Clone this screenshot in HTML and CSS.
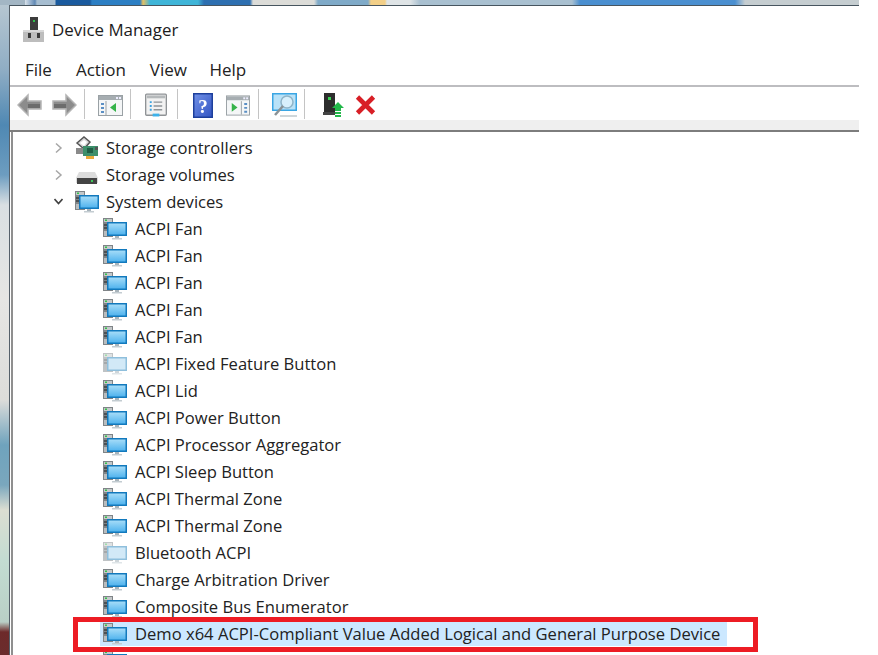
FILE: index.html
```html
<!DOCTYPE html>
<html lang="en">
<head>
<meta charset="utf-8">
<title>Device Manager</title>
<link rel="stylesheet" href="styles.css">
</head>
<body>
<svg class="defs" width="0" height="0" aria-hidden="true">
  <defs>
    <linearGradient id="screen" x1="0" y1="0" x2="0" y2="1">
      <stop offset="0" stop-color="#a5dcf8"/><stop offset="1" stop-color="#52b4ee"/>
    </linearGradient>
    <linearGradient id="helpfill" x1="0" y1="0" x2="1" y2="1">
      <stop offset="0" stop-color="#6f8fe6"/><stop offset="1" stop-color="#3557c4"/>
    </linearGradient>
    <symbol id="sys" viewBox="0 0 24 22">
      <rect x="0" y="0" width="10" height="19" fill="#7f8487"/>
      <rect x="1" y="1" width="8" height="3" fill="#c4c8ca"/>
      <rect x="2" y="1.500" width="2" height="1.500" fill="#35c24a"/>
      <rect x="1" y="6" width="8" height="2" fill="#4d5154"/>
      <rect x="1" y="9" width="8" height="2" fill="#4d5154"/>
      <rect x="1" y="13" width="8" height="5" fill="#b8bcbe"/>
      <rect x="4" y="4" width="20" height="14" fill="#1279bd"/>
      <rect x="5.500" y="5.500" width="17" height="11" fill="url(#screen)"/>
      <rect x="12" y="18" width="4" height="2" fill="#a9b4bb"/>
      <rect x="9" y="20" width="10" height="1.500" fill="#c3ccd1"/>
    </symbol>
    <symbol id="sysoff" viewBox="0 0 24 22">
      <rect x="0" y="0" width="10" height="19" fill="#bfc3c5"/>
      <rect x="1" y="1" width="8" height="3" fill="#dfe2e3"/>
      <rect x="2" y="1.500" width="2" height="1.500" fill="#9fdca9"/>
      <rect x="1" y="6" width="8" height="2" fill="#a5a8aa"/>
      <rect x="1" y="9" width="8" height="2" fill="#a5a8aa"/>
      <rect x="4" y="4" width="20" height="14" fill="#8fbfdc"/>
      <rect x="5.500" y="5.500" width="17" height="11" fill="#d2e9f7"/>
      <rect x="12" y="18" width="4" height="2" fill="#cfd6da"/>
      <rect x="9" y="20" width="10" height="1.500" fill="#dfe5e8"/>
    </symbol>
  </defs>
</svg>
<div class="shot">
  <div class="window">
    <div class="titlebar">
      <svg class="appicon" viewBox="0 0 21 25" width="21" height="25">
        <rect x="7" y="0" width="8" height="13" fill="#3c3c3c"/>
        <rect x="10" y="3" width="2" height="2" fill="#2fc04a"/>
        <rect x="0" y="13" width="21" height="12" fill="#bdbdbd"/>
        <rect x="0" y="13" width="21" height="2" fill="#d8d8d8"/>
        <rect x="5" y="16" width="3" height="5" fill="#3a3a3a"/>
        <rect x="14" y="16" width="3" height="5" fill="#3a3a3a"/>
      </svg>
      <span class="title">Device Manager</span>
    </div>
    <nav class="menubar">
      <span class="menuitem">File</span>
      <span class="menuitem">Action</span>
      <span class="menuitem">View</span>
      <span class="menuitem">Help</span>
    </nav>
    <div class="toolbar">
      <div class="group nav">
        <svg class="tool" width="25" height="24" viewBox="0 0 25 24"><path d="M1 12 11 2v6h13v8H11v6z" fill="#8c8c8c" stroke="#b4b4b4" stroke-width="1.500"/><path d="M11 11h12v4H11z" fill="#6c6c6c"/></svg>
        <svg class="tool" width="25" height="24" viewBox="0 0 25 24"><path d="M24 12 14 2v6H1v8h13v6z" fill="#8c8c8c" stroke="#b4b4b4" stroke-width="1.500"/><path d="M2 11h12v4H2z" fill="#6c6c6c"/></svg>
      </div>
      <div class="group tree-toggle">
        <svg class="tool" width="25" height="21" viewBox="0 0 25 21"><rect x=".5" y=".5" width="24" height="20" fill="#f4f6f7" stroke="#9aa1a5"/><rect x="1" y="1" width="23" height="4" fill="#a6adb1"/><rect x="18" y="2" width="2" height="2" fill="#eef"/><rect x="21" y="2" width="2" height="2" fill="#eef"/><path d="M8 6v14" stroke="#9aa1a5"/><path d="M3 9h3M3 13h3M3 17h3" stroke="#5a8fc4" stroke-width="2"/><path d="M18 8v9l-6-4.500z" fill="#35b34a"/></svg>
      </div>
      <div class="group props">
        <svg class="tool" width="22" height="24" viewBox="0 0 23 24"><rect x=".7" y=".7" width="21.600" height="22" rx="1" fill="#f2f2f2" stroke="#8f9396" stroke-width="1.400"/><rect x="2" y="2" width="19" height="3" fill="#b5b9bb"/><path d="M5 9h2M5 13h2M5 17h2" stroke="#3da3e0" stroke-width="2"/><path d="M9 9h9M9 13h9M9 17h9" stroke="#8e9498" stroke-width="1.500"/><rect x="8" y="21" width="7" height="3" fill="#3db2ea"/></svg>
      </div>
      <div class="group help">
        <svg class="tool" width="20" height="25" viewBox="0 0 20 25"><rect width="20" height="25" fill="#1d3f9c"/><rect x="1.500" y="1.500" width="17" height="22" fill="url(#helpfill)"/><text class="qmark" x="10" y="20" text-anchor="middle">?</text></svg>
        <svg class="tool" width="24" height="21" viewBox="0 0 25 21"><rect x=".5" y=".5" width="24" height="20" fill="#f4f6f7" stroke="#9aa1a5"/><rect x="1" y="1" width="23" height="4" fill="#a6adb1"/><rect x="18" y="2" width="2" height="2" fill="#eef"/><rect x="21" y="2" width="2" height="2" fill="#eef"/><path d="M16 6v14" stroke="#9aa1a5"/><path d="M19 9h3M19 13h3M19 17h3" stroke="#5a8fc4" stroke-width="2"/><path d="M6 8v9l6-4.500z" fill="#35b34a"/></svg>
      </div>
      <div class="group scan">
        <svg class="tool" width="25" height="25" viewBox="0 0 25 25"><rect x="0" y="0" width="25" height="18" fill="#3aa6e4"/><rect x="1.500" y="1.500" width="22" height="15" fill="#b9e2f8"/><circle cx="15" cy="9" r="6" fill="#d8f0fc" stroke="#8fb4c8" stroke-width="1.500"/><path d="M11 13 3 22" stroke="#8a9296" stroke-width="2.500"/><path d="M8 23h17" stroke="#bfc8cd" stroke-width="1.500"/></svg>
      </div>
      <div class="group driver">
        <svg class="tool" width="21" height="24" viewBox="0 0 21 24"><rect x="1" y="0" width="11" height="20" fill="#2d2d2d"/><rect x="5" y="4" width="3" height="3" fill="#39d353"/><rect x="0" y="19" width="12" height="3" fill="#444"/><path d="M15 9l6 6h-3v3h-6v-3H9z" fill="#22b84a"/><path d="M12 19h6v2h-6zM12 22h6v2h-6z" fill="#22b84a"/></svg>
        <svg class="tool" width="21" height="20" viewBox="0 0 20 20"><path d="M2 2 18 18M18 2 2 18" stroke="#d81f26" stroke-width="4.600"/></svg>
      </div>
    </div>
    <div class="band"></div>
    <div class="treepane">
      <ul class="tree">
        <li class="row"><svg class="chev" width="9" height="12" viewBox="0 0 9 12"><path d="M2 1.500 7 6l-5 4.500" fill="none" stroke="#a6a6a6" stroke-width="1.500"/></svg>
          <svg class="icon" width="24" height="24" viewBox="0 0 24 24"><path d="M2 7 9 1l6 5-6 7z" fill="#d8d8d8" stroke="#555" stroke-width="1.500"/><path d="M5 7 9 4l3 2-3 4z" fill="#fff"/><rect x="1" y="12" width="7" height="6" fill="#8a8a8a"/><rect x="8" y="10" width="15" height="10" fill="#3d8f6b"/><rect x="12" y="12" width="6" height="5" fill="#1f5f45"/><rect x="20" y="11" width="3" height="3" fill="#555"/><rect x="11" y="20" width="8" height="3" fill="#e8a93a"/></svg>
          <span class="label">Storage controllers</span></li>
        <li class="row"><svg class="chev" width="9" height="12" viewBox="0 0 9 12"><path d="M2 1.500 7 6l-5 4.500" fill="none" stroke="#a6a6a6" stroke-width="1.500"/></svg>
          <svg class="icon" width="24" height="22" viewBox="0 0 24 22"><path d="M4 8h16l3 6v5H1v-5z" fill="#dcdcdc"/><rect x="2" y="14" width="20" height="6" fill="#444"/><rect x="16" y="16" width="2" height="2" fill="#3fc95a"/></svg>
          <span class="label">Storage volumes</span></li>
        <li class="row"><svg class="chev" width="9" height="12" viewBox="0 0 9 12"><path d="M.5 3 4.500 7.500 8.500 3" fill="none" stroke="#404040" stroke-width="1.600"/></svg>
          <svg class="icon" width="24" height="22"><use href="#sys"/></svg>
          <span class="label">System devices</span></li>
        <li class="row child"><svg class="icon" width="24" height="22"><use href="#sys"/></svg><span class="label">ACPI Fan</span></li>
        <li class="row child"><svg class="icon" width="24" height="22"><use href="#sys"/></svg><span class="label">ACPI Fan</span></li>
        <li class="row child"><svg class="icon" width="24" height="22"><use href="#sys"/></svg><span class="label">ACPI Fan</span></li>
        <li class="row child"><svg class="icon" width="24" height="22"><use href="#sys"/></svg><span class="label">ACPI Fan</span></li>
        <li class="row child"><svg class="icon" width="24" height="22"><use href="#sys"/></svg><span class="label">ACPI Fan</span></li>
        <li class="row child"><svg class="icon" width="24" height="22"><use href="#sysoff"/></svg><span class="label">ACPI Fixed Feature Button</span></li>
        <li class="row child"><svg class="icon" width="24" height="22"><use href="#sys"/></svg><span class="label">ACPI Lid</span></li>
        <li class="row child"><svg class="icon" width="24" height="22"><use href="#sys"/></svg><span class="label">ACPI Power Button</span></li>
        <li class="row child"><svg class="icon" width="24" height="22"><use href="#sys"/></svg><span class="label">ACPI Processor Aggregator</span></li>
        <li class="row child"><svg class="icon" width="24" height="22"><use href="#sys"/></svg><span class="label">ACPI Sleep Button</span></li>
        <li class="row child"><svg class="icon" width="24" height="22"><use href="#sys"/></svg><span class="label">ACPI Thermal Zone</span></li>
        <li class="row child"><svg class="icon" width="24" height="22"><use href="#sys"/></svg><span class="label">ACPI Thermal Zone</span></li>
        <li class="row child"><svg class="icon" width="24" height="22"><use href="#sysoff"/></svg><span class="label">Bluetooth ACPI</span></li>
        <li class="row child"><svg class="icon" width="24" height="22"><use href="#sys"/></svg><span class="label">Charge Arbitration Driver</span></li>
        <li class="row child"><svg class="icon" width="24" height="22"><use href="#sys"/></svg><span class="label">Composite Bus Enumerator</span></li>
        <li class="row child selected"><svg class="icon" width="24" height="22"><use href="#sys"/></svg><span class="label">Demo x64 ACPI-Compliant Value Added Logical and General Purpose Device</span></li>
        <li class="row child"><svg class="icon" width="24" height="22"><use href="#sys"/></svg></li>
      </ul>
      <div class="callout"></div>
    </div>
  </div>
</div>
</body>
</html>
```
FILE: styles.css
```css
html, body { margin: 0; height: 100%; background: #fff; overflow: hidden; }
body { font-family: "Open Sans", "Noto Sans", sans-serif; color: #1a1a1a; }
.defs { position: absolute; }
.shot {
  width: 859px; height: 655px; box-sizing: border-box; padding: 5px 0 0 9px; overflow: hidden;
  background:
    linear-gradient(90deg, #a3b6c4 0, #a3b6c4 25px, #d9e2ea 25px, #5f88b4 35px, #a6bdd0 37px, #a6bdd0 55px, #1a5a9e 56px, #1a5a9e 90px, #2c7fc4 92px, #2c7fc4 140px, #e8c060 143px, #3fb5d8 150px, #3fb5d8 198px, #2d6fb0 204px, #2d6fb0 250px, #dcdcd8 253px, #dcdcd8 314px, #7faac8 318px, #7faac8 368px, #f2cf88 371px, #f2cf88 385px, #dfe4e6 387px, #dfe4e6 410px, #a9c0d0 420px, #a9c0d0 572px, #4a8fd0 580px, #4a8fd0 735px, #c5cdd0 745px, #c5cdd0 859px) top / 100% 5px no-repeat,
    linear-gradient(180deg, #b9c8d2 0, #8fadc4 70px, #4f88b3 125px, #6d9dc0 175px, #d9dfe2 205px, #e6e6e4 300px, #dcdcda 400px, #6fa3bd 445px, #7aa7bd 485px, #dcded2 510px, #c3dcd2 560px, #b9cfc6 622px, #6d2a2a 632px, #6b2c2c 655px);
}
.window {
  height: 650px; box-sizing: border-box; background: #fff;
  border-top: 1px solid #47555f; border-left: 1px solid #55606a;
  display: flex; flex-direction: column;
}
.titlebar { height: 49px; flex: none; display: flex; align-items: center; padding: 0 0 2px 13px; gap: 8px; box-sizing: border-box; }
.appicon { flex: none; }
.title { font-size: 16.900px; color: #1c1c1c; }
.menubar { height: 30px; box-sizing: content-box; flex: none; display: flex; align-items: center; padding-left: 15px; gap: 24px; border-bottom: 2px solid #bdbdc0; }
.menuitem { font-size: 17px; color: #222; position: relative; top: -1px; }
.menuitem:last-child { margin-left: -1.500px; }
.toolbar { height: 33px; box-sizing: border-box; padding: 2px 0 1px 7px; flex: none; display: flex; align-items: center; }
.group { display: flex; align-items: center; height: 30px; padding: 0 7px 0 14px; border-right: 1px solid #c4c4c4; flex: none; }
.group.nav { padding-left: 0; gap: 10px; }
.group.props { padding-right: 10px; }
.group.help { padding-left: 15px; padding-right: 8px; gap: 13px; }
.group.tree-toggle, .group.scan { padding-left: 13px; }
.group.driver { border-right: 0; padding-left: 18px; gap: 11px; }
.tool { flex: none; margin-top: 2px; filter: blur(.35px); }
.qmark { font: bold 19px "Liberation Serif", serif; fill: #fff; }
.band { height: 10px; flex: none; background: #efefef; border-bottom: 2px solid #7d7d7d; }
.treepane { flex: 1; min-height: 0; position: relative; overflow: hidden; background: #fff; border-left: 2px solid #8f8f8f; margin-left: 1px; }
.tree { list-style: none; margin: 0; padding: 2px 0 0; }
.row { height: 27px; display: flex; align-items: center; box-sizing: border-box; padding-left: 41px; }
.row.child { padding-left: 0; margin-left: 87px; }
.chev { flex: none; width: 9px; margin-right: 12px; }
.icon { flex: none; margin-right: 7px; filter: blur(.35px); }
.row.child .icon { margin-left: 3px; margin-right: 8px; }
.label { font-size: 16.580px; white-space: nowrap; color: #222; }
.selected { background: #cce8ff; width: 627px; height: 24px; margin-top: 2px; margin-bottom: 1px; padding-bottom: 1px; }
.callout { position: absolute; left: 60px; top: 485px; width: 685px; height: 35px; box-sizing: border-box; border: 5px solid #ed1c24; }
```
